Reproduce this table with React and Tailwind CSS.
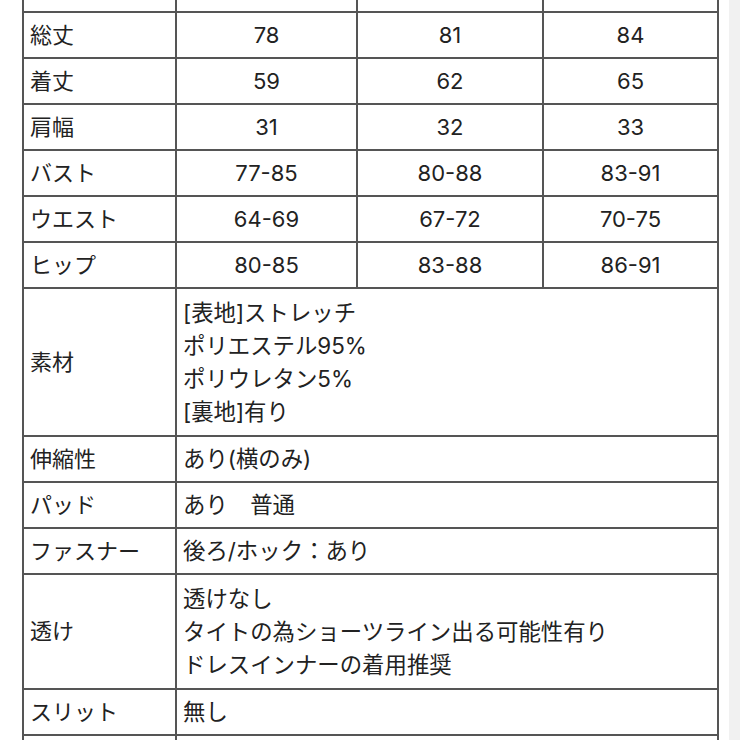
const font = { fontFamily: 'Inter, "Noto Sans CJK JP", sans-serif' };

const sizes = [
  ['総丈', '78', '81', '84'],
  ['着丈', '59', '62', '65'],
  ['肩幅', '31', '32', '33'],
  ['バスト', '77-85', '80-88', '83-91'],
  ['ウエスト', '64-69', '67-72', '70-75'],
  ['ヒップ', '80-85', '83-88', '86-91'],
];

const details = [
  ['素材', ['[表地]ストレッチ', 'ポリエステル95%', 'ポリウレタン5%', '[裏地]有り']],
  ['伸縮性', ['あり(横のみ)']],
  ['パッド', ['あり\u3000普通']],
  ['ファスナー', ['後ろ/ホック：あり']],
  ['透け', ['透けなし', 'タイトの為ショーツライン出る可能性有り', 'ドレスインナーの着用推奨']],
  ['スリット', ['無し']],
];

const cell = 'border-2 border-[#555] p-0';

export default function App() {
  return (
    <div className="flex bg-white min-h-[740px] overflow-hidden text-[#222]" style={font}>
      <div className="flex-1 overflow-hidden">
        <table className="table-fixed border-collapse w-[695px] ml-[22px] -mt-[35px] text-[22px]">
          <colgroup>
            <col className="w-[153px]" />
            <col className="w-[181px]" />
            <col className="w-[186px]" />
            <col className="w-[175px]" />
          </colgroup>
          <tbody>
            <tr className="h-[46px]">
              <td className={cell}></td>
              <td className={cell}></td>
              <td className={cell}></td>
              <td className={cell}></td>
            </tr>
            {sizes.map((r) => (
              <tr key={r[0]} className="h-[46px]">
                <td className={`${cell} pl-[6px] leading-[44px]`}>{r[0]}</td>
                <td className={`${cell} text-center leading-[44px]`}>{r[1]}</td>
                <td className={`${cell} text-center leading-[44px]`}>{r[2]}</td>
                <td className={`${cell} text-center leading-[44px]`}>{r[3]}</td>
              </tr>
            ))}
            {details.map(([label, lines]) => (
              <tr key={label} className={lines.length > 1 ? '' : 'h-[46px]'}>
                <td className={`${cell} pl-[6px] ${lines.length > 1 ? 'leading-[33px]' : 'leading-[44px]'}`}>{label}</td>
                <td colSpan={3} className={`${cell} pl-[6px] text-[22.4px] ${lines.length > 1 ? 'py-[7px] leading-[33px]' : 'leading-[44px]'}`}>
                  {lines.map((l) => (
                    <div key={l}>{l}</div>
                  ))}
                </td>
              </tr>
            ))}
            <tr className="h-[46px]">
              <td className={cell}></td>
              <td colSpan={3} className={cell}></td>
            </tr>
          </tbody>
        </table>
      </div>
      <div className="w-[11px] bg-[#f1f1f1]"></div>
    </div>
  );
}
